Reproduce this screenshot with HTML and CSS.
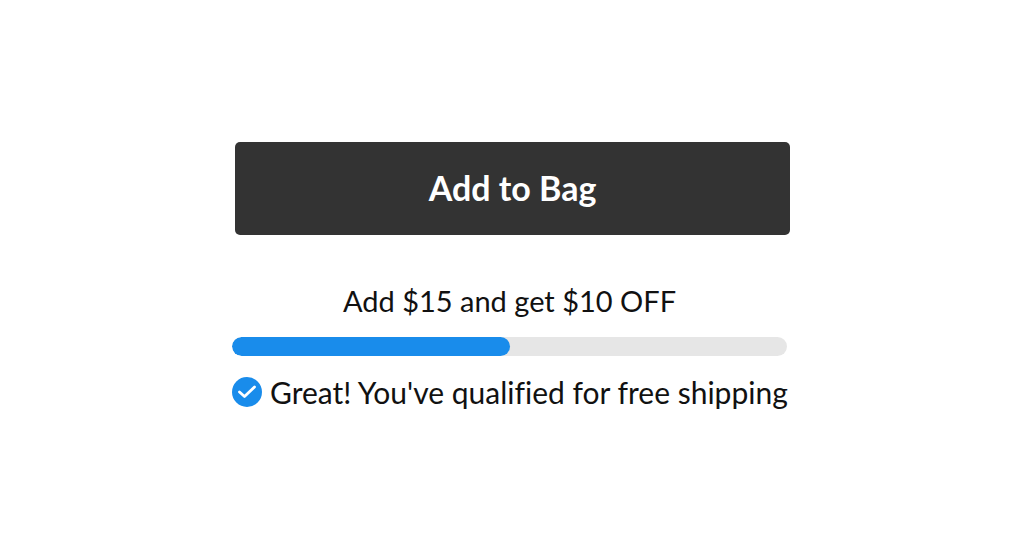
FILE: index.html
```
<!DOCTYPE html>
<html lang="en">

<head>
    <meta charset="utf-8">
    <meta name="viewport" content="width=device-width, initial-scale=1.0">
    <title>Add to Bag</title>
    <link rel="stylesheet" href="styles.css">
</head>

<body>
    <main class="wrap">
        <button type="button" class="add-button">Add to Bag</button>
        <div class="offer">
            <label class="offer-text" for="progress">Add $15 and get $10 OFF</label>
            <progress class="offer-bar" id="progress" value="50" max="100"></progress>
            <p class="shipping">
                <svg class="check" viewBox="0 0 30 30" aria-hidden="true">
                    <circle cx="15" cy="15" r="15" fill="#198ceb" />
                    <path d="M7.5 15L12.5 19.5L22.5 10" fill="none" stroke="#fff" stroke-width="2.8" stroke-linecap="round" stroke-linejoin="round" />
                </svg>
                <span>Great! You've qualified for free shipping</span>
            </p>
        </div>
    </main>
</body>

</html>
```

FILE: styles.css
```
body {
    margin: 0;
    min-height: 100vh;
    display: flex;
    align-items: center;
    justify-content: center;
    background-color: #fff;
    color: #111;
    font-family: Lato, "Open Sans", sans-serif;
    font-variant-ligatures: none;
}

.wrap {
    box-sizing: border-box;
    width: 100%;
    max-width: 560px;
    padding: 16px 2px 0 0;
}

.add-button {
    display: block;
    width: calc(100% - 3px);
    margin: 0 0 0 3px;
    padding: 25px 20px 27px;
    border: none;
    border-radius: 5px;
    background-color: #333;
    color: #fff;
    font-family: inherit;
    font-size: 34px;
    font-weight: bold;
    line-height: 41px;
    cursor: pointer;
}

.offer {
    margin: 46px 3px 0 0;
}

.offer-text {
    display: block;
    font-size: 29px;
    line-height: 40px;
    text-align: center;
}

.offer-bar {
    display: block;
    width: 100%;
    height: 19px;
    margin-top: 16px;
    border: none;
    border-radius: 10px;
    background-color: #e6e6e6;
    overflow: hidden;
    appearance: none;
}

.offer-bar::-webkit-progress-bar {
    background-color: #e6e6e6;
}

.offer-bar::-webkit-progress-value {
    border-radius: 10px;
    background-color: #198ceb;
}

.shipping {
    display: flex;
    align-items: center;
    gap: 8px;
    margin: 16px 0 0;
    font-size: 30px;
    line-height: 40px;
    white-space: nowrap;
}

.check {
    flex: none;
    width: 30px;
    height: 30px;
}

@media (max-width: 560px) {
    .shipping {
        white-space: normal;
    }
}
```
